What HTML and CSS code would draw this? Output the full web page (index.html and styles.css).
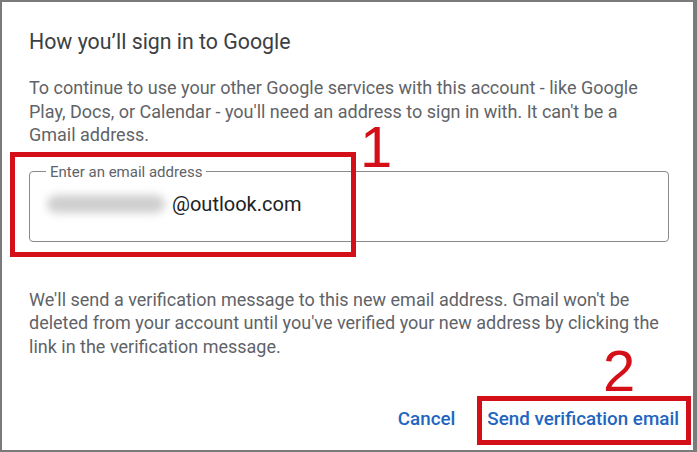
FILE: index.html
```html
<!DOCTYPE html>
<html>
  <head>
    <meta charset="UTF-8">
    <title>How you'll sign in to Google</title>
    <link rel="stylesheet" href="styles.css">
  </head>
<body>
	<div class="frame">
		<div class="dialog">
			<h1 class="title">How you’ll sign in to Google</h1>
			<p class="text intro">To continue to use your other Google services with this account - like Google Play, Docs, or Calendar - you'll need an address to sign in with. It can't be a Gmail address.</p>
			<fieldset class="field">
				<legend>Enter an email address</legend>
				<div class="value"><span class="blur"></span>@outlook.com</div>
			</fieldset>
			<p class="text note">We'll send a verification message to this new email address. Gmail won't be deleted from your account until you've verified your new address by clicking the link in the verification message.</p>
			<div class="actions">
				<button class="btn">Cancel</button>
				<button class="btn">Send verification email</button>
			</div>
		</div>
		<!-- annotations -->
		<div class="mark mark-one"></div>
		<div class="num num-one">1</div>
		<div class="mark mark-two"></div>
		<div class="num num-two">2</div>
	</div>
</body>
</html>
```

FILE: styles.css
```css
html,body{
	margin:0;
	padding:0;
	background:#fff;
}
.frame{
	position:relative;
	box-sizing:border-box;
	width:697px;
	height:452px;
	border:2px solid #7b7b7b;
	border-right-width:4px;
	background:#fff;
	font-family:Roboto,"Liberation Sans",sans-serif;
}
.dialog{
	padding:28px 0 0 27px;
	width:640px;
}
.title{
	margin:0;
	font-size:21.3px;
	font-weight:400;
	line-height:24px;
	color:#3c4043;
}
.text{
	margin:22px 0 0 0;
	font-size:18px;
	line-height:23.5px;
	color:#5f6368;
}
.intro{
	width:620px;
}
.field{
	margin:16px 0 0 0;
	padding:0 0 0 17px;
	height:79px;
	box-sizing:border-box;
	border:1px solid #8a8a8a;
	border-radius:4px;
}
.field legend{
	margin-left:-1px;
	padding:0 4px;
	font-size:15px;
	color:#5f6368;
}
.value{
	display:flex;
	align-items:center;
	margin-top:11px;
	font-size:20px;
	color:#202124;
	line-height:24px;
}
.blur{
	display:inline-block;
	width:118px;
	height:18px;
	margin-right:7px;
	background:#cfcfcf;
	border-radius:9px;
	filter:blur(4px);
}
.note{
	margin-top:46px;
}
.actions{
	display:flex;
	justify-content:flex-end;
	gap:16px;
	margin:43px -18px 0 0;
}
.btn{
	border:0;
	background:none;
	padding:6px 8px;
	font-family:Roboto,"Liberation Sans",sans-serif;
	font-size:18.8px;
	line-height:24px;
	font-weight:500;
	color:#1f66c1;
}
.mark{
	position:absolute;
	border:5px solid #d40f17;
	box-sizing:border-box;
}
.mark-one{
	left:8px;
	top:150px;
	width:346px;
	height:105px;
}
.mark-two{
	left:475px;
	top:394px;
	width:214px;
	height:49px;
}
.num{
	position:absolute;
	color:#d40f17;
	font-family:"Liberation Sans",Arial,sans-serif;
	font-size:58px;
	line-height:58px;
}
.num-one{
	left:358px;
	top:116px;
}
.num-two{
	left:601px;
	top:340px;
}
```
